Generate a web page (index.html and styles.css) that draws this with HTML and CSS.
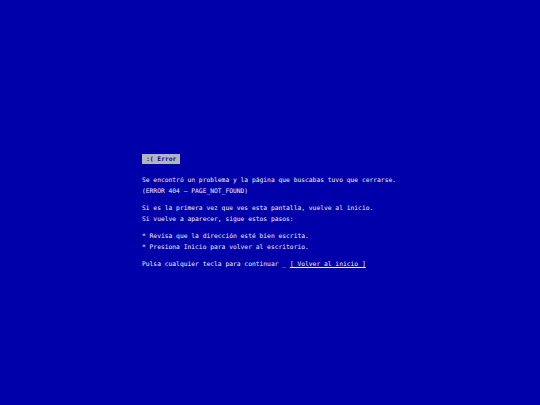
FILE: index.html
```html
<!DOCTYPE html>
<html lang="es">
<head>
<meta charset="utf-8">
<title>Error 404</title>
<link rel="stylesheet" href="styles.css">
</head>
<body>
<main class="screen">
  <div class="panel">
    <div class="badge">:( Error</div>
    <p class="para">Se encontró un problema y la página que buscabas tuvo que cerrarse.<br>(ERROR 404 — PAGE_NOT_FOUND)</p>
    <p class="para">Si es la primera vez que ves esta pantalla, vuelve al inicio.<br>Si vuelve a aparecer, sigue estos pasos:</p>
    <p class="para">* Revisa que la dirección esté bien escrita.<br>* Presiona Inicio para volver al escritorio.</p>
    <p class="para">Pulsa cualquier tecla para continuar <span class="cursor">_</span> <a class="link" href="#">[ Volver al inicio ]</a></p>
  </div>
</main>
</body>
</html>
```

FILE: styles.css
```css
html, body {
  margin: 0;
  padding: 0;
  background: #0000aa;
}
.screen {
  width: 540px;
  height: 405px;
  box-sizing: border-box;
  padding-top: 154px;
  display: flex;
  justify-content: center;
  font-family: "DejaVu Sans Mono", monospace;
  font-size: 6.3px;
  line-height: 10.5px;
  color: #f0f0f0;
}
.panel {
  width: 256px;
  white-space: nowrap;
}
.badge {
  display: inline-block;
  background: #b4b4be;
  color: #0000aa;
  font-weight: bold;
  line-height: 10px;
  padding: 0 4px;
  margin-bottom: 11px;
  vertical-align: top;
}
.para {
  margin: 0 0 7px 0;
}
.link {
  color: #f0f0f0;
  text-decoration: underline;
}
```
